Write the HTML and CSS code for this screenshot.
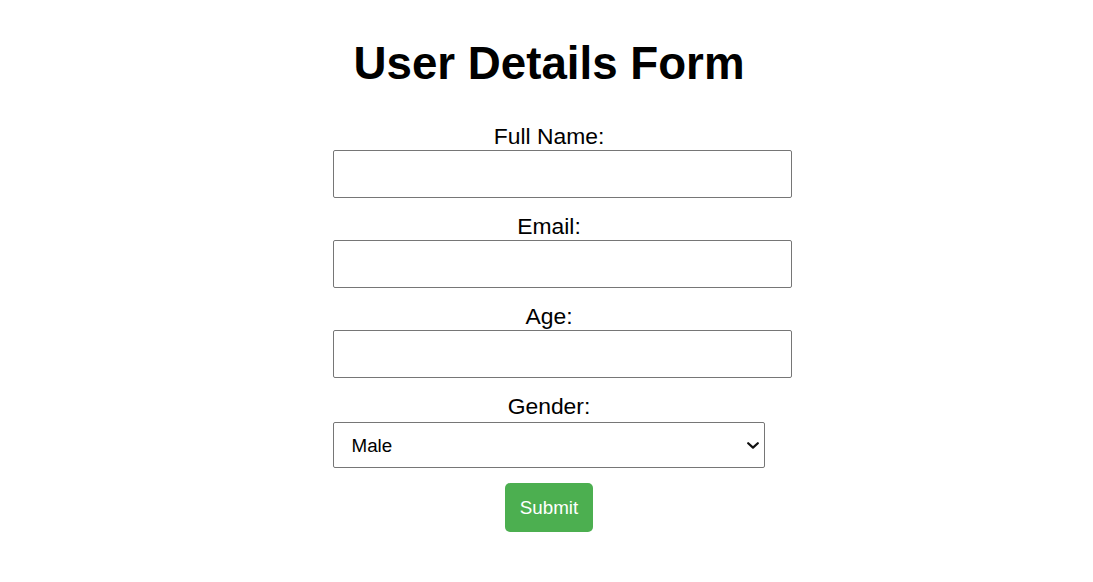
FILE: index.html
```html
<!DOCTYPE html>
<html lang="en">
<head>
<meta charset="utf-8">
<title>User Details Form</title>
<link rel="stylesheet" href="styles.css">
</head>
<body>
<div class="wrap">
  <h1 class="title">User Details Form</h1>
  <form class="form">
    <label class="label" for="name">Full Name:</label>
    <input class="field" type="text" id="name">
    <label class="label" for="email">Email:</label>
    <input class="field" type="email" id="email">
    <label class="label" for="age">Age:</label>
    <input class="field" type="number" id="age">
    <label class="label" for="gender">Gender:</label>
    <div class="select-wrap">
      <select class="select" id="gender">
        <option>Male</option>
        <option>Female</option>
        <option>Other</option>
      </select>
      <svg class="chevron" width="12" height="7" viewBox="0 0 12 7" aria-hidden="true">
        <polyline points="1.2,1.2 6,5.6 10.8,1.2" fill="none" stroke="#111111" stroke-width="2.2" stroke-linecap="round" stroke-linejoin="round"/>
      </svg>
    </div>
    <div class="actions">
      <button class="submit" type="submit">Submit</button>
    </div>
  </form>
</div>
</body>
</html>
```

FILE: styles.css
```css
html, body {
  margin: 0;
  padding: 0;
  background: #ffffff;
}

body {
  font-family: "Liberation Sans", Arial, sans-serif;
  color: #000000;
}

.wrap {
  width: 432px;
  margin: 0 auto;
  padding-left: 5px;
  text-align: center;
}

.title {
  font-size: 45.7px;
  line-height: 52px;
  font-weight: bold;
  margin: 38.2px 0 32.5px;
}

.form {
  margin: 0;
}

.label {
  display: block;
  font-size: 22.86px;
  line-height: 26px;
}

.field {
  display: block;
  box-sizing: border-box;
  width: 458.6px;
  height: 48.6px;
  margin: 1px 0 14.4px;
  padding: 0 14px;
  border: 1px solid #767676;
  border-radius: 2px;
  background: #ffffff;
  font-family: inherit;
  font-size: 19px;
}

.select-wrap {
  position: relative;
  width: 432px;
  margin-top: 3px;
}

.select {
  display: block;
  box-sizing: border-box;
  width: 432px;
  height: 46.8px;
  margin: 0;
  padding: 0 30px 0 17.5px;
  border: 1px solid #767676;
  border-radius: 2px;
  background: #ffffff;
  color: #000000;
  font-family: inherit;
  font-size: 18.8px;
  -webkit-appearance: none;
  appearance: none;
}

.chevron {
  position: absolute;
  right: 6px;
  top: 20px;
  pointer-events: none;
}

.actions {
  margin-top: 14.6px;
}

.submit {
  display: inline-block;
  box-sizing: border-box;
  height: 49px;
  width: 88px;
  padding: 0;
  border: none;
  border-radius: 5px;
  background: #4caf50;
  color: #ffffff;
  font-family: inherit;
  font-size: 18.8px;
  cursor: pointer;
}
```
